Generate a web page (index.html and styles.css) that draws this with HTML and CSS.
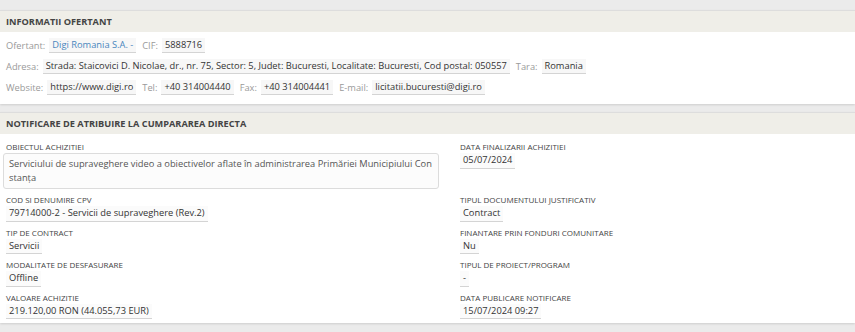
FILE: index.html
```html
<!DOCTYPE html>
<html>
<head>
    <meta charset="UTF-8">
    <title>Notificare de atribuire</title>
    <link rel="stylesheet" href="styles.css">
</head>
<body>
    <div class="panel">
        <div class="panel-head">Informatii ofertant</div>
        <div class="panel-body ofertant">
            <div class="line">
                <span class="lbl">Ofertant:</span><span class="val link">Digi Romania S.A. -</span>
                <span class="lbl">CIF:</span><span class="val">5888716</span>
            </div>
            <div class="line">
                <span class="lbl">Adresa:</span><span class="val">Strada: Staicovici D. Nicolae, dr., nr. 75, Sector: 5, Judet: Bucuresti, Localitate: Bucuresti, Cod postal: 050557</span>
                <span class="lbl">Tara:</span><span class="val">Romania</span>
            </div>
            <div class="line">
                <span class="lbl">Website:</span><span class="val">https://www.digi.ro</span>
                <span class="lbl">Tel:</span><span class="val">+40 314004440</span>
                <span class="lbl">Fax:</span><span class="val">+40 314004441</span>
                <span class="lbl">E-mail:</span><span class="val">licitatii.bucuresti@digi.ro</span>
            </div>
        </div>
    </div>

    <div class="panel">
        <div class="panel-head">Notificare de atribuire la cumpararea directa</div>
        <div class="panel-body grid">
            <div class="field">
                <div class="cap">Obiectul achizitiei</div>
                <div class="box">Serviciului de supraveghere video a obiectivelor aflate în administrarea Primăriei Municipiului Constanța</div>
            </div>
            <div class="field">
                <div class="cap">Data finalizarii achizitiei</div>
                <span class="val">05/07/2024</span>
            </div>
            <div class="field">
                <div class="cap">Cod si denumire CPV</div>
                <span class="val">79714000-2 - Servicii de supraveghere (Rev.2)</span>
            </div>
            <div class="field">
                <div class="cap">Tipul documentului justificativ</div>
                <span class="val">Contract</span>
            </div>
            <div class="field">
                <div class="cap">Tip de contract</div>
                <span class="val">Servicii</span>
            </div>
            <div class="field">
                <div class="cap">Finantare prin fonduri comunitare</div>
                <span class="val">Nu</span>
            </div>
            <div class="field">
                <div class="cap">Modalitate de desfasurare</div>
                <span class="val">Offline</span>
            </div>
            <div class="field">
                <div class="cap">Tipul de proiect/program</div>
                <span class="val">-</span>
            </div>
            <div class="field">
                <div class="cap">Valoare achizitie</div>
                <span class="val">219.120,00 RON (44.055,73 EUR)</span>
            </div>
            <div class="field">
                <div class="cap">Data publicare notificare</div>
                <span class="val">15/07/2024 09:27</span>
            </div>
        </div>
    </div>
    <div class="tabs"><span class="tab"></span></div>
</body>
</html>
```

FILE: styles.css
```css
body {
    margin: 0;
    padding-top: 10px;
    background-color: #ebebeb;
    font-family: "Open Sans", sans-serif;
    color: #333333;
}
.panel {
    margin-bottom: 2px;
    box-shadow: 0 1px 2px rgba(0, 0, 0, 0.12);
}
.panel + .panel {
    margin-top: 8px;
}
.panel-head {
    height: 21px;
    line-height: 21px;
    padding-left: 6px;
    background-color: #efeee8;
    border-top: 1px solid #dddddd;
    color: #444444;
    font-size: 9.2px;
    font-weight: bold;
    text-transform: uppercase;
}
.panel-body {
    background-color: #ffffff;
}
.ofertant {
    padding: 3px 6px 6px 6px;
}
.line {
    display: flex;
    align-items: center;
    height: 21px;
    white-space: nowrap;
}
.lbl {
    color: #9a9a9a;
    font-size: 9.3px;
    margin-right: 4px;
}
.val {
    display: inline-block;
    padding: 1px 3px 1px 3px;
    margin-right: 6px;
    line-height: 12px;
    background-color: #f7f7f7;
    border-bottom: 1px solid #d4d4d4;
    font-size: 9.3px;
    color: #333333;
}
.link {
    color: #4a86bd;
}
.grid {
    display: grid;
    grid-template-columns: 454px 1fr;
    padding: 7px 3px 4px 3px;
    row-gap: 5px;
}
.field {
    display: flex;
    flex-direction: column;
    align-items: flex-start;
    padding-left: 3px;
}
.cap {
    color: #444444;
    font-size: 8px;
    line-height: 11px;
    text-transform: uppercase;
    margin-bottom: 1px;
}
.grid .val {
    line-height: 12.5px;
    background-color: #fbfbfb;
}
.box {
    box-sizing: border-box;
    margin-left: -3px;
    width: 436px;
    height: 36px;
    padding: 3px 2px 3px 5px;
    border: 1px solid #dcdcdc;
    border-radius: 3px;
    background-color: #fcfcfc;
    font-size: 9.3px;
    line-height: 14px;
    color: #555555;
    word-break: break-all;
}
.tabs {
    height: 5px;
}
.tab {
    display: inline-block;
    box-sizing: border-box;
    width: 40px;
    height: 5px;
    background-color: #ffffff;
    border: 1px solid #dddddd;
    border-bottom: none;
}
```
